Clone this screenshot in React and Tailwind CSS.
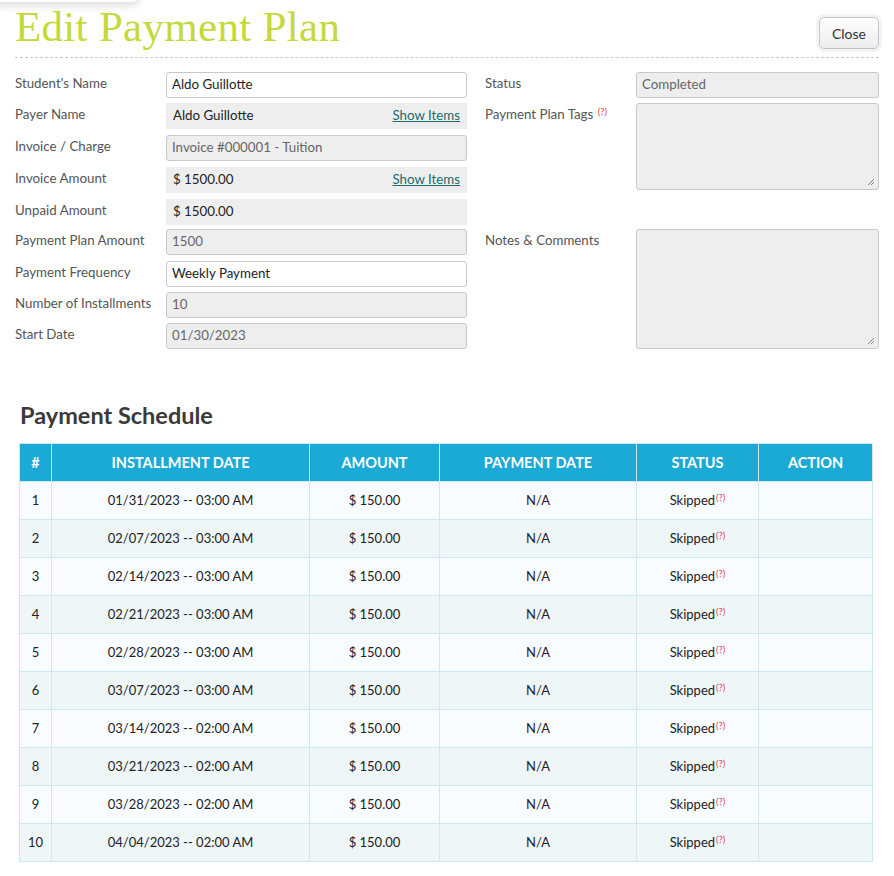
import React from "react";

const font = { fontFamily: "Lato, 'Open Sans', sans-serif" };

const rows = [
  ["1", "01/31/2023 -- 03:00 AM"],
  ["2", "02/07/2023 -- 03:00 AM"],
  ["3", "02/14/2023 -- 03:00 AM"],
  ["4", "02/21/2023 -- 03:00 AM"],
  ["5", "02/28/2023 -- 03:00 AM"],
  ["6", "03/07/2023 -- 03:00 AM"],
  ["7", "03/14/2023 -- 02:00 AM"],
  ["8", "03/21/2023 -- 02:00 AM"],
  ["9", "03/28/2023 -- 02:00 AM"],
  ["10", "04/04/2023 -- 02:00 AM"],
];

function Help() {
  return <sup className="ml-[1px] text-[9.5px] text-[#e8424f] relative -top-[4px]">(?)</sup>;
}

function Label({ children, className = "" }) {
  return <div className={"w-[151px] shrink-0 pt-[2px] text-[13.3px] text-[#555] " + className}>{children}</div>;
}

function Field({ children, white, plain, link }) {
  if (plain) {
    return (
      <div className="flex h-[26px] flex-1 items-center justify-between bg-[#eeeeee] px-[7px] text-[13.3px] text-[#222]">
        <span>{children}</span>
        {link && <span className="text-[13.3px] text-[#1c6b6a] underline">Show Items</span>}
      </div>
    );
  }
  return (
    <div
      className={
        "flex h-[26px] flex-1 items-center rounded-[3px] border border-[#c8c8c8] px-[5px] text-[13.3px] " +
        (white ? "bg-white text-[#222]" : "bg-[#eeeeee] text-[#666]")
      }
    >
      {children}
    </div>
  );
}

function Row({ label, children, mb }) {
  return (
    <div className={"flex items-start " + mb}>
      <Label>{label}</Label>
      {children}
    </div>
  );
}

function Resize() {
  return (
    <svg className="absolute bottom-[3px] right-[3px]" width="8" height="8" viewBox="0 0 8 8">
      <path d="M7 1L1 7M7 4L4 7" stroke="#888" strokeWidth="1" />
    </svg>
  );
}

export default function App() {
  return (
    <div className="relative min-h-[876px] w-[894px] overflow-hidden bg-white" style={font}>
      <div className="absolute -left-[10px] -top-[14px] h-[16px] w-[150px] rounded-full shadow-[0_3px_10px_rgba(0,0,0,0.15)]" />
      <div className="flex items-start justify-between px-[15px] pt-[3px]">
        <h1
          className="text-[43px] leading-[48px] text-[#c4da3a]"
          style={{ fontFamily: "'Liberation Serif', serif", letterSpacing: "0.3px" }}
        >
          Edit Payment Plan
        </h1>
        <button className="mt-[14px] h-[32px] rounded-[5px] border border-[#c4c4c4] bg-gradient-to-b from-white to-[#ececec] px-[12px] text-[14px] text-[#333] shadow-[0_0_0_3px_#f4f4f4]">
          Close
        </button>
      </div>
      <div className="mx-[15px] mt-[6px] border-t border-dashed border-[#c9c9c9]" />

      <div className="mt-[14px] flex px-[15px]">
        <div className="w-[452px]">
          <Row label="Student's Name" mb="mb-[5px]"><Field white>Aldo Guillotte</Field></Row>
          <Row label="Payer Name" mb="mb-[6px]"><Field plain link>Aldo Guillotte</Field></Row>
          <Row label="Invoice / Charge" mb="mb-[6px]"><Field>Invoice #000001 - Tuition</Field></Row>
          <Row label="Invoice Amount" mb="mb-[6px]"><Field plain link>$ 1500.00</Field></Row>
          <Row label="Unpaid Amount" mb="mb-[4px]"><Field plain>$ 1500.00</Field></Row>
          <Row label="Payment Plan Amount" mb="mb-[6px]"><Field>1500</Field></Row>
          <Row label="Payment Frequency" mb="mb-[5px]"><Field white>Weekly Payment</Field></Row>
          <Row label="Number of Installments" mb="mb-[5px]"><Field>10</Field></Row>
          <Row label="Start Date" mb=""><Field>01/30/2023</Field></Row>
        </div>
        <div className="ml-[18px] flex-1">
          <Row label="Status" mb="mb-[5px]"><Field>Completed</Field></Row>
          <Row label={<span>Payment Plan Tags <Help /></span>} mb="mb-[39px]">
            <div className="relative h-[87px] flex-1 rounded-[3px] border border-[#c8c8c8] bg-[#eeeeee]"><Resize /></div>
          </Row>
          <Row label="Notes & Comments" mb="">
            <div className="relative h-[120px] flex-1 rounded-[3px] border border-[#c8c8c8] bg-[#eeeeee]"><Resize /></div>
          </Row>
        </div>
      </div>

      <h2 className="ml-[20px] mt-[49px] text-[23.5px] font-bold text-[#3a3a3a]">Payment Schedule</h2>

      <table className="ml-[19px] mt-[10px] w-[854px] border-collapse text-[13px] text-[#222]">
        <thead>
          <tr className="h-[38px] bg-[#1ba9d6] text-[14.5px] text-white">
            <th className="w-[32px] border border-[#cde8f0] font-bold">#</th>
            <th className="w-[258px] border border-[#cde8f0] font-bold">INSTALLMENT DATE</th>
            <th className="w-[130px] border border-[#cde8f0] font-bold">AMOUNT</th>
            <th className="w-[197px] border border-[#cde8f0] font-bold">PAYMENT DATE</th>
            <th className="w-[122px] border border-[#cde8f0] font-bold">STATUS</th>
            <th className="border border-[#cde8f0] font-bold">ACTION</th>
          </tr>
        </thead>
        <tbody>
          {rows.map((r, i) => (
            <tr key={r[0]} className={"h-[38px] text-center " + (i % 2 === 0 ? "bg-[#f9fcfe]" : "bg-[#eef6f8]")}>
              <td className="border border-[#cde8f0]">{r[0]}</td>
              <td className="border border-[#cde8f0]">{r[1]}</td>
              <td className="border border-[#cde8f0]">$ 150.00</td>
              <td className="border border-[#cde8f0]">N/A</td>
              <td className="border border-[#cde8f0]">Skipped<Help /></td>
              <td className="border border-[#cde8f0]"></td>
            </tr>
          ))}
        </tbody>
      </table>
    </div>
  );
}
